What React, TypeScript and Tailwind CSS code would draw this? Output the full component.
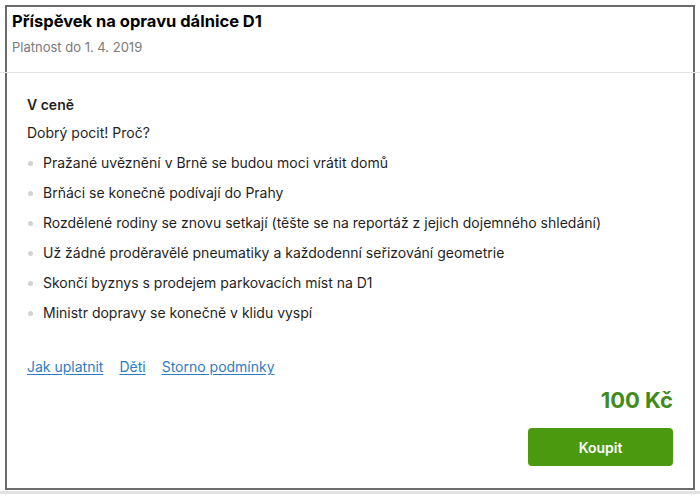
const items = [
  "Pražané uvěznění v Brně se budou moci vrátit domů",
  "Brňáci se konečně podívají do Prahy",
  "Rozdělené rodiny se znovu setkají (těšte se na reportáž z jejich dojemného shledání)",
  "Už žádné proděravělé pneumatiky a každodenní seřizování geometrie",
  "Skončí byznys s prodejem parkovacích míst na D1",
  "Ministr dopravy se konečně v klidu vyspí",
];

const links = ["Jak uplatnit", "Děti", "Storno podmínky"];

export default function App() {
  return (
    <div className="h-[496px] w-[700px] overflow-hidden bg-white font-['Inter',Arial,sans-serif] text-[#1f1f1f]">
      <div className="mx-[5px] mt-[5px] h-[485px] border-2 border-[#6b6b6b] bg-white">
        <div className="px-[5px] pt-[4px] pb-[16px]">
          <h1 className="text-[16.5px] leading-[20px] font-bold text-black">
            Příspěvek na opravu dálnice D1
          </h1>
          <p className="mt-[8px] text-[13px] leading-[17px] text-[#7a7a7a]">
            Platnost do 1. 4. 2019
          </p>
        </div>
        <div className="-ml-[7px] h-px w-[700px] bg-[#e3e3e3]" />
        <div className="px-[20px] pt-[22px]">
          <h2 className="text-[14px] leading-[20px] font-semibold">V ceně</h2>
          <p className="mt-[8px] text-[14px] leading-[20px]">Dobrý pocit! Proč?</p>
          <ul className="mt-[10px]">
            {items.map((item) => (
              <li key={item} className="flex h-[30px] items-start text-[14px] leading-[20px]">
                <span className="mt-[8px] mr-[10px] ml-[1px] h-[5px] w-[5px] shrink-0 rounded-full bg-[#d2d2d2]" />
                {item}
              </li>
            ))}
          </ul>
          <div className="mt-[24px] flex gap-[16px] text-[14px] leading-[20px]">
            {links.map((link) => (
              <a key={link} href="#" className="text-[#2f7cc2] underline underline-offset-2">
                {link}
              </a>
            ))}
          </div>
          <div className="mt-[9px] flex flex-col items-end">
            <div className="text-[22px] leading-[28px] font-bold text-[#3f8c1c]">100 Kč</div>
            <button
              type="button"
              className="mt-[14px] h-[38px] w-[145px] rounded-[4px] bg-[#4a990f] text-[14px] font-semibold text-white"
            >
              Koupit
            </button>
          </div>
        </div>
      </div>
      <div className="mt-px h-[3px] w-full bg-[#e3e3e3]" />
    </div>
  );
}
